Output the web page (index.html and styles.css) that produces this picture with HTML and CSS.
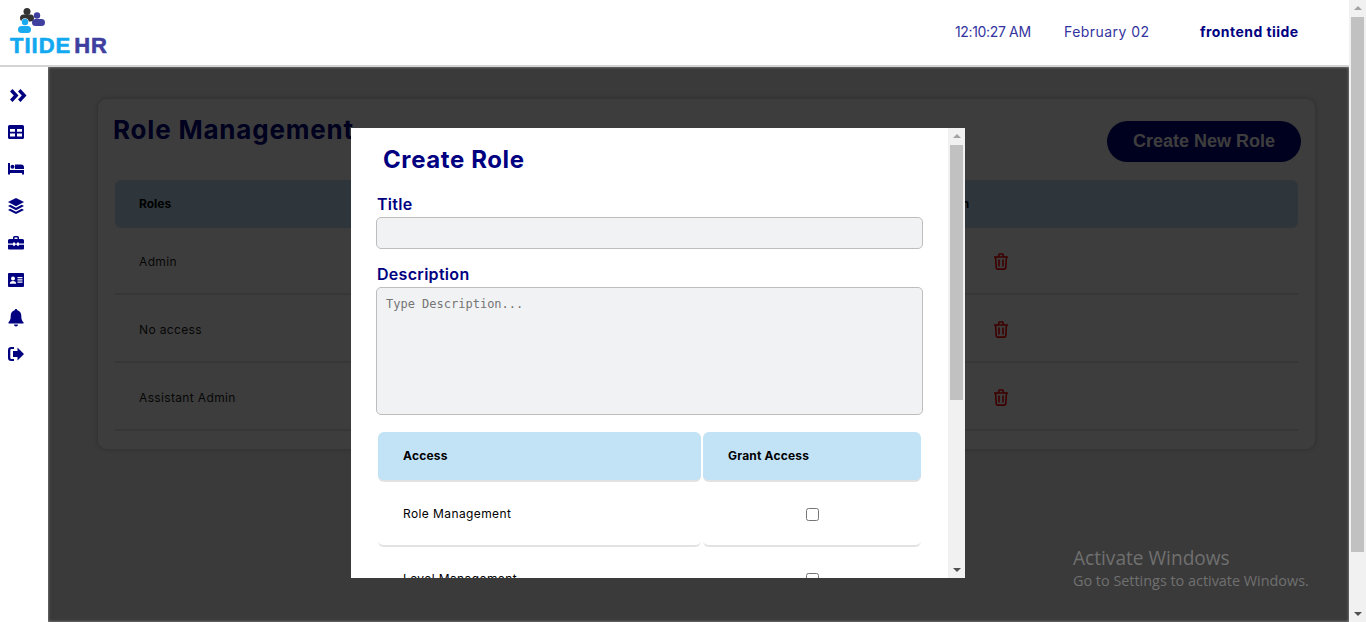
FILE: index.html
```html
<!DOCTYPE html>
<html lang="en">

<head>
    <meta charset="UTF-8">
    <title>Role Management</title>
    <link rel="stylesheet" href="styles.css">
</head>

<body>
<div class="app">
    <header class="topbar">
        <div class="logo">
            <svg class="logo-people" width="27" height="25" viewBox="0 0 27 25">
                <circle cx="9" cy="3.500" r="3.500" fill="#333"/>
                <rect x="2" y="6.500" width="14" height="7" rx="3.500" fill="#333"/>
                <circle cx="19" cy="7.500" r="3.200" fill="#3f3f9f"/>
                <rect x="14" y="11" width="13" height="7" rx="3.500" fill="#3f3f9f"/>
                <circle cx="7" cy="14" r="3.700" fill="#fff"/>
                <rect x="-1" y="17" width="16" height="9" rx="4" fill="#fff"/>
                <circle cx="7" cy="14" r="3.200" fill="#1ba9ef"/>
                <rect x="0" y="18" width="13" height="7" rx="3.500" fill="#1ba9ef"/>
            </svg>
            <div class="logo-text"><span class="logo-tiide">TIIDE</span><span class="logo-hr">HR</span></div>
        </div>
        <div class="topbar-info">
            <span class="time">12:10:27 AM</span>
            <span class="date">February 02</span>
            <span class="user">frontend tiide</span>
        </div>
    </header>

    <div class="layout">
        <nav class="sidebar">
            <svg class="nav-icon" viewBox="0 0 16 16"><path d="M0 2.500l2.500-2.500 6 6.500-6 6.500L0 10.500l3.800-4zM8 2.500l2.500-2.500 6 6.500-6 6.500L8 10.500l3.800-4z" transform="translate(2 2)"/></svg>
            <svg class="nav-icon" viewBox="0 0 16 16"><path fill-rule="evenodd" d="M1.500 1h13A1.500 1.500 0 0 1 16 2.500v11a1.500 1.500 0 0 1-1.500 1.500h-13A1.500 1.500 0 0 1 0 13.500v-11A1.500 1.500 0 0 1 1.500 1zM2 5v2.800h5V5zM9 5v2.800h5V5zM2 9.500v3h5v-3zM9 9.500v3h5v-3z"/></svg>
            <svg class="nav-icon" viewBox="0 0 16 16"><path d="M0 2h2v7h14v4.500h-2V12H2v1.500H0z"/><circle cx="4.500" cy="5.800" r="2"/><path d="M7 3.500h6a3 3 0 0 1 3 3V8H7z"/></svg>
            <svg class="nav-icon" viewBox="0 0 16 16"><path d="M8 0l8 4-8 4.200L0 4zM2.300 6.800L8 9.800l5.700-3L16 8l-8 4.200L0 8zM2.300 10.800L8 13.800l5.700-3L16 12l-8 4-8-4z"/></svg>
            <svg class="nav-icon" viewBox="0 0 16 16"><path fill-rule="evenodd" d="M5 4V2.500A1.500 1.500 0 0 1 6.500 1h3A1.500 1.500 0 0 1 11 2.500V4h3.500A1.500 1.500 0 0 1 16 5.500V8.500h-5V7.500H9V8.500H7V7.500H5V8.500H0V5.500A1.500 1.500 0 0 1 1.500 4zM6.500 2.500V4h3V2.500zM0 9.700h5v1h2v-1h2v1h2v-1h5V13.500a1 1 0 0 1-1 1H1a1 1 0 0 1-1-1z"/></svg>
            <svg class="nav-icon" viewBox="0 0 16 16"><path fill-rule="evenodd" d="M1 1h14a1 1 0 0 1 1 1v12a1 1 0 0 1-1 1H1a1 1 0 0 1-1-1V2a1 1 0 0 1 1-1zM5 4.500a2 2 0 1 0 0 4 2 2 0 0 0 0-4zM1.800 11.800h6.400c0-1.700-1.200-2.700-3.200-2.700s-3.200 1-3.200 2.700zM9.500 5V6.200h5V5zM9.500 7.300V8.500h5V7.300zM9.500 9.600V10.800h5V9.600z"/></svg>
            <svg class="nav-icon" viewBox="0 0 16 16"><path d="M8 -1a1.300 1.300 0 0 1 1.300 1.300C11.800 1 13.300 3 13.300 5.700c0 4 1 5.300 2.200 6.500v1.300H.5v-1.300c1.200-1.200 2.200-2.500 2.200-6.500C2.700 3 4.200 1 6.700.3A1.300 1.300 0 0 1 8-1zM6 14.500h4a2 2 0 0 1-4 0z" transform="translate(0 1)"/></svg>
            <svg class="nav-icon" viewBox="0 0 16 16"><path d="M6 3H3.500A1.200 1.200 0 0 0 2.300 4.200v7.600A1.200 1.200 0 0 0 3.500 13H6v2H3.300A3.300 3.300 0 0 1 0 11.700V4.300A3.300 3.300 0 0 1 3.300 1H6z"/><path d="M9.500 1.500L16 8l-6.500 6.500V11H5V5h4.500z"/></svg>
        </nav>

        <main class="content">
            <section class="card">
                <div class="card-head">
                    <h1 class="page-title">Role Management</h1>
                    <button class="create-btn">Create New Role</button>
                </div>
                <table class="roles">
                    <thead>
                        <tr><th class="col-role">Roles</th><th>Action</th></tr>
                    </thead>
                    <tbody>
                        <tr><td>Admin</td><td class="col-action"><svg class="trash" viewBox="0 0 14 17"><path fill="none" stroke="currentColor" stroke-width="1.600" d="M0 4h14M1.600 4l.6 11a1.200 1.200 0 0 0 1.200 1.100h7.200a1.200 1.200 0 0 0 1.200-1.100l.6-11M4.300 4l1-3h3.400l1 3M5 6.500v7M9 6.500v7"/></svg></td></tr>
                        <tr><td>No access</td><td class="col-action"><svg class="trash" viewBox="0 0 14 17"><path fill="none" stroke="currentColor" stroke-width="1.600" d="M0 4h14M1.600 4l.6 11a1.200 1.200 0 0 0 1.200 1.100h7.200a1.200 1.200 0 0 0 1.200-1.100l.6-11M4.300 4l1-3h3.400l1 3M5 6.500v7M9 6.500v7"/></svg></td></tr>
                        <tr><td>Assistant Admin</td><td class="col-action"><svg class="trash" viewBox="0 0 14 17"><path fill="none" stroke="currentColor" stroke-width="1.600" d="M0 4h14M1.600 4l.6 11a1.200 1.200 0 0 0 1.200 1.100h7.200a1.200 1.200 0 0 0 1.200-1.100l.6-11M4.300 4l1-3h3.400l1 3M5 6.500v7M9 6.500v7"/></svg></td></tr>
                    </tbody>
                </table>
            </section>
            <div class="overlay">
                <div class="watermark">
                    <div class="watermark-title">Activate Windows</div>
                    <div class="watermark-sub">Go to Settings to activate Windows.</div>
                </div>
            </div>
        </main>
    </div>

    <div class="modal">
        <div class="modal-body">
            <h2 class="modal-title">Create Role</h2>
            <label class="field-label">Title</label>
            <input class="field-input" type="text">
            <label class="field-label field-label-desc">Description</label>
            <textarea class="field-area" placeholder="Type Description..."></textarea>
            <table class="access">
                <thead>
                    <tr><th class="col-access">Access</th><th>Grant Access</th></tr>
                </thead>
                <tbody>
                    <tr><td class="col-access">Role Management</td><td class="col-check"><input type="checkbox"></td></tr>
                    <tr><td class="col-access">Level Management</td><td class="col-check"><input type="checkbox"></td></tr>
                </tbody>
            </table>
        </div>
        <div class="scrollbar modal-scroll">
            <span class="arrow-up"></span>
            <span class="thumb modal-thumb"></span>
            <span class="arrow-down"></span>
        </div>
    </div>

    <div class="scrollbar page-scroll">
        <span class="arrow-up"></span>
        <span class="thumb page-thumb"></span>
        <span class="arrow-down"></span>
    </div>
</div>
</body>

</html>
```
FILE: styles.css
```css
* {
    box-sizing: border-box;
}

html,
body {
    margin: 0;
    height: 100%;
    overflow: hidden;
}

body {
    font-family: "Inter", "Liberation Sans", sans-serif;
    color: #000;
    background-color: #fff;
}

.app {
    position: relative;
    height: 622px;
    padding-right: 17px;
    display: flex;
    flex-direction: column;
}

/* header */
.topbar {
    height: 67px;
    display: flex;
    justify-content: space-between;
    align-items: center;
    background-color: #fff;
    border-bottom: 2px solid #d4d4d4;
    padding: 0 51px 2px 10px;
}

.logo {
    width: 97px;
}

.logo-people {
    display: block;
    margin-left: 8px;
}

.logo-text {
    font-family: "Liberation Sans", sans-serif;
    font-weight: 700;
    font-size: 22px;
    line-height: 19px;
    letter-spacing: 1px;
    white-space: nowrap;
    display: flex;
    gap: 3px;
    margin-top: 3px;
    -webkit-text-stroke: 0.6px;
}

.logo-tiide {
    color: #12a9f0;
}

.logo-hr {
    color: #3f3f9f;
}

.topbar-info {
    display: flex;
    align-items: center;
    font-size: 14px;
    color: #3333a0;
}

.time {
    width: 109px;
    letter-spacing: -0.35px;
}

.date {
    width: 136px;
    letter-spacing: 0.45px;
}

.user {
    width: 98px;
    white-space: nowrap;
    letter-spacing: 0.45px;
    font-weight: 700;
    color: #000080;
}

/* sidebar + page */
.layout {
    flex: 1;
    display: flex;
    min-height: 0;
}

.sidebar {
    width: 48px;
    display: flex;
    flex-direction: column;
    align-items: flex-start;
    gap: 21px;
    padding: 20px 0 0 8px;
    background-color: #fff;
}

.nav-icon {
    width: 16px;
    height: 16px;
    overflow: visible;
    fill: #000080;
}

.content {
    position: relative;
    flex: 1;
    background-color: #f0f0f0;
    padding: 31px 33px 0 49px;
}

.card {
    height: 352px;
    background-color: #fff;
    border: 1px solid #d8d8d8;
    border-radius: 10px;
    box-shadow: 0 0 4px rgba(0, 0, 0, 0.15);
    padding: 22px 17px 0;
}

.card-head {
    display: flex;
    justify-content: space-between;
    align-items: flex-start;
    height: 59px;
}

.page-title {
    margin: -2px 0 0 -2px;
    font-size: 26px;
    line-height: 22px;
    letter-spacing: 0.8px;
    color: #000080;
}

.create-btn {
    width: 194px;
    height: 41px;
    border: 0;
    border-radius: 21px;
    margin-right: -3px;
    background-color: #000080;
    color: #fff;
    font-family: "Liberation Sans", sans-serif;
    font-weight: 700;
    font-size: 18px;
}

.roles {
    width: 100%;
    border-collapse: separate;
    border-spacing: 0;
    font-size: 12px;
}

.roles th {
    height: 48px;
    text-align: left;
    padding: 0 0 2px 24px;
    background-color: #c2e2f5;
}

.roles th:first-child {
    border-radius: 6px 0 0 6px;
}

.roles th:last-child {
    border-radius: 0 6px 6px 0;
}

.col-role {
    width: 792px;
}

.roles td {
    height: 68px;
    padding: 2px 0 0 24px;
    letter-spacing: 0.35px;
    color: #1c1c1c;
    border-bottom: 2px solid #e6e6e6;
}

.roles tbody tr:first-child td {
    height: 67px;
}

.roles td.col-action {
    padding-left: 87px;
}

.trash {
    display: block;
    width: 14px;
    height: 17px;
    overflow: visible;
    color: #f00;
}

.overlay {
    position: absolute;
    top: 0;
    left: 0;
    right: 0;
    bottom: 0;
    background-color: rgba(0, 0, 0, 0.76);
    box-shadow: inset 0 0 3px rgba(255, 255, 255, 0.5);
}

.watermark {
    position: absolute;
    top: 478px;
    left: 1025px;
    font-family: "Open Sans", sans-serif;
    color: #707070;
    white-space: nowrap;
}

.watermark-title {
    font-size: 19.1px;
    line-height: 26px;
}

.watermark-sub {
    font-size: 14.4px;
    line-height: 20px;
}

/* modal */
.modal {
    position: absolute;
    top: 128px;
    left: 351px;
    width: 614px;
    height: 450px;
    background-color: #fff;
    overflow: hidden;
}

.modal-body {
    padding: 15px 0 0 25px;
    width: 597px;
}

.modal-title {
    margin: 0 0 16px 7px;
    font-size: 24px;
    line-height: 34px;
    letter-spacing: 0.6px;
    color: #000080;
}

.field-label {
    display: block;
    margin-left: 1px;
    font-size: 16px;
    line-height: 22px;
    letter-spacing: 0.3px;
    font-weight: 600;
    color: #000080;
}

.field-label-desc {
    margin-top: 14px;
}

.field-input,
.field-area {
    display: block;
    width: 547px;
    background-color: #f1f2f4;
    border: 1px solid #bdbdbd;
    border-radius: 5px;
    margin-top: 2px;
}

.field-input {
    height: 32px;
}

.field-area {
    height: 128px;
    padding: 9px;
    resize: none;
    font-family: "DejaVu Sans Mono", monospace;
    font-size: 12px;
}

.field-area::placeholder {
    color: #757575;
}

.access {
    margin: 17px 0 0;
    width: 547px;
    border-collapse: separate;
    border-spacing: 2px 0;
    table-layout: fixed;
    font-size: 12px;
}

.access th {
    height: 50px;
    text-align: left;
    padding: 0 0 1px 25px;
    letter-spacing: 0.2px;
    background-color: #c2e2f5;
    border-radius: 6px;
    border-bottom: 2px solid #e2e2e2;
}

.col-access {
    width: 323px;
}

.access td {
    height: 65px;
    border-bottom: 2px solid #e2e2e2;
    border-radius: 6px;
}

.access td.col-access {
    padding-left: 25px;
    letter-spacing: 0.4px;
}

.col-check {
    text-align: center;
}

.col-check input {
    display: inline-block;
    vertical-align: middle;
    width: 13px;
    height: 13px;
    margin: 0;
}

/* fake scrollbars, the screenshot has them drawn by the browser */
.scrollbar {
    position: absolute;
    top: 0;
    right: 0;
    display: flex;
    flex-direction: column;
    background-color: #f1f1f1;
}

.page-scroll {
    width: 17px;
    height: 622px;
}

.modal-scroll {
    width: 17px;
    height: 450px;
}

.thumb {
    display: block;
    margin: 0 2px;
    background-color: #c1c1c1;
}

.page-thumb {
    height: 535px;
    margin-top: 17px;
}

.modal-thumb {
    height: 255px;
    margin-top: 17px;
}

.arrow-up,
.arrow-down {
    position: absolute;
    left: 50%;
    margin-left: -4px;
    border-left: 4px solid transparent;
    border-right: 4px solid transparent;
}

.arrow-up {
    top: 6px;
    border-bottom: 4px solid #a3a3a3;
}

.arrow-down {
    bottom: 6px;
    border-top: 4px solid #505050;
}
```
